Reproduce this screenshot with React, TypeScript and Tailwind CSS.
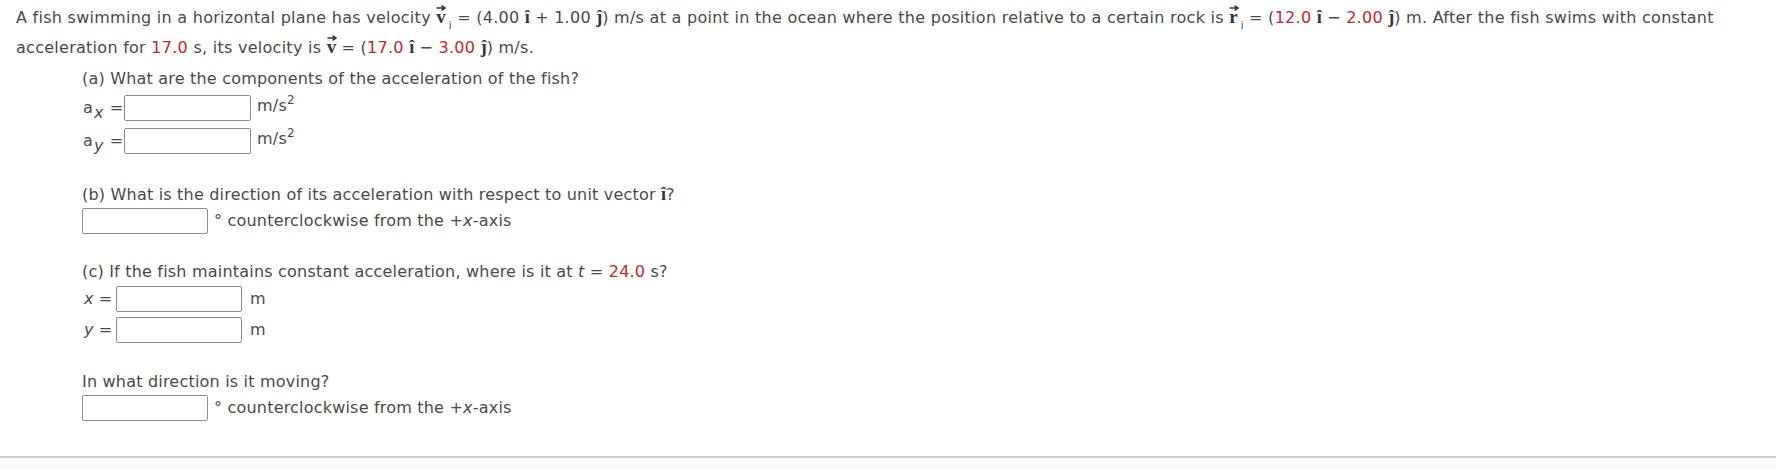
import React from "react";

const R = ({ children }: { children: React.ReactNode }) => (
  <span className="text-[#c0282d]">{children}</span>
);

const Hat = ({ c }: { c: string }) => (
  <span className="font-bold text-[#2e3440] text-[18px] tracking-normal" style={{ fontFamily: '"Liberation Serif", serif' }}>
    {c}
  </span>
);

const Vec = ({ c, sub }: { c: string; sub?: string }) => (
  <span className="inline-block">
    <span className="relative inline-block font-bold text-[#2e3440] text-[19px] tracking-normal" style={{ fontFamily: '"Liberation Serif", serif' }}>
      {c}
      <svg className="absolute left-[0px] top-[3px]" width="10" height="6" viewBox="0 0 10 6">
        <path d="M0.5 3 H8.5 M5.5 0.6 L9 3 L5.5 5.4" stroke="#2e3440" strokeWidth="1.5" fill="none" />
      </svg>
    </span>
    {sub && <span className="relative top-[6px] ml-[3px] text-[10px] leading-none">{sub}</span>}
  </span>
);

const Box = ({ w }: { w: string }) => (
  <div className={`${w} h-[26px] border border-[#8c8c8c] rounded-[2px] bg-white`} />
);

export default function App() {
  return (
    <div
      className="w-[1776px] h-[469px] bg-white text-[#4a4a4a] text-[16px] tracking-[0.2px] overflow-hidden flex flex-col"
      style={{ fontFamily: '"DejaVu Sans", Verdana, sans-serif' }}
    >
      <div className="pl-[16px] pt-[2px] leading-[29px] whitespace-nowrap tracking-[0.27px]">
        A fish swimming in a horizontal plane has velocity <Vec c="v" sub="i" /> = (4.00 <Hat c="î" /> + 1.00{" "}
        <Hat c="ĵ" />) m/s at a point in the ocean where the position relative to a certain rock is <Vec c="r" sub="i" /> = (
        <R>12.0</R> <Hat c="î" /> − <R>2.00</R> <Hat c="ĵ" />) m. After the fish swims with constant
        <br />
        acceleration for <R>17.0</R> s, its velocity is <Vec c="v" /> = (<R>17.0</R> <Hat c="î" /> − <R>3.00</R>{" "}
        <Hat c="ĵ" />) m/s.
      </div>

      <div className="pl-[82px] flex flex-col">
        <div className="mt-[6px] leading-[22px]">(a) What are the components of the acceleration of the fish?</div>
        <div className="mt-[5px] flex items-center h-[26px]">
          <span className="w-[42px] pl-[1px] flex items-center">
            a<span className="italic relative top-[5px] ml-[1px]">x</span>
            <span className="ml-[6px]">=</span>
          </span>
          <Box w="w-[127px]" />
          <span className="ml-[6px] relative top-[-2px]">
            m/s<sup className="text-[12px] top-[-7px]">2</sup>
          </span>
        </div>
        <div className="mt-[7px] flex items-center h-[26px]">
          <span className="w-[42px] pl-[1px] flex items-center">
            a<span className="italic relative top-[5px] ml-[1px]">y</span>
            <span className="ml-[6px]">=</span>
          </span>
          <Box w="w-[127px]" />
          <span className="ml-[6px] relative top-[-2px]">
            m/s<sup className="text-[12px] top-[-7px]">2</sup>
          </span>
        </div>

        <div className="mt-[29px] leading-[22px]">
          (b) What is the direction of its acceleration with respect to unit vector <Hat c="î" />?
        </div>
        <div className="mt-[2px] flex items-center">
          <Box w="w-[126px]" />
          <span className="ml-[6px]">° counterclockwise from the +<i>x</i>-axis</span>
        </div>

        <div className="mt-[27px] leading-[22px]">
          (c) If the fish maintains constant acceleration, where is it at <i>t</i> = <R>24.0</R> s?
        </div>
        <div className="mt-[3px] flex items-center">
          <span className="w-[34px] pl-[2px] flex items-center">
            <i>x</i>
            <span className="ml-[5px]">=</span>
          </span>
          <Box w="w-[126px]" />
          <span className="ml-[8px]">m</span>
        </div>
        <div className="mt-[5px] flex items-center">
          <span className="w-[34px] pl-[2px] flex items-center">
            <i>y</i>
            <span className="ml-[5px]">=</span>
          </span>
          <Box w="w-[126px]" />
          <span className="ml-[8px]">m</span>
        </div>

        <div className="mt-[28px] leading-[22px]">In what direction is it moving?</div>
        <div className="mt-[2px] flex items-center">
          <Box w="w-[126px]" />
          <span className="ml-[6px]">° counterclockwise from the +<i>x</i>-axis</span>
        </div>
      </div>

      <div className="mt-[35px] h-[2px] bg-[#cccccc]" />
      <div className="flex-1 bg-[#fafafa]" />
    </div>
  );
}
